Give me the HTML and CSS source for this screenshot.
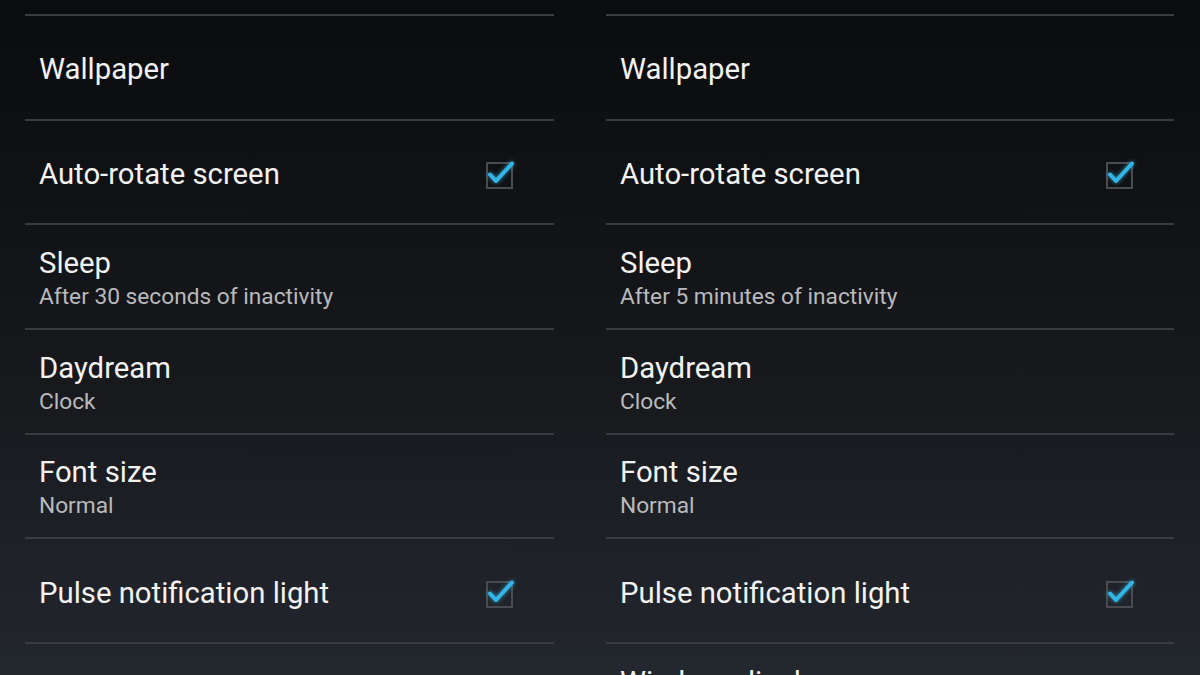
FILE: index.html
```html
<!DOCTYPE html>
<html>
<head>
<meta charset="utf-8">
<link rel="stylesheet" href="styles.css">
</head>
<body>
<div class="screen">
  <div class="panel panel-left">
    <div class="row"><div class="text"><div class="title">Wallpaper</div></div></div>
    <div class="row"><div class="text"><div class="title">Auto-rotate screen</div></div>
      <svg class="check" viewBox="0 0 34 34" width="34" height="34"><rect x="4" y="6" width="25" height="25" fill="none" stroke="#4a4b4e" stroke-width="2"/><path d="M7 17.5 L13 24 L29 6.5" fill="none" stroke="#33b5e5" stroke-width="4" stroke-linecap="round" stroke-linejoin="round" class="tick"/></svg></div>
    <div class="row two"><div class="text"><div class="title">Sleep</div><div class="sub">After 30 seconds of inactivity</div></div></div>
    <div class="row two"><div class="text"><div class="title">Daydream</div><div class="sub">Clock</div></div></div>
    <div class="row two"><div class="text"><div class="title">Font size</div><div class="sub">Normal</div></div></div>
    <div class="row"><div class="text"><div class="title">Pulse notification light</div></div>
      <svg class="check" viewBox="0 0 34 34" width="34" height="34"><rect x="4" y="6" width="25" height="25" fill="none" stroke="#4a4b4e" stroke-width="2"/><path d="M7 17.5 L13 24 L29 6.5" fill="none" stroke="#33b5e5" stroke-width="4" stroke-linecap="round" stroke-linejoin="round" class="tick"/></svg></div>
    <div class="row"></div>
  </div>
  <div class="panel panel-right">
    <div class="row"><div class="text"><div class="title">Wallpaper</div></div></div>
    <div class="row"><div class="text"><div class="title">Auto-rotate screen</div></div>
      <svg class="check" viewBox="0 0 34 34" width="34" height="34"><rect x="4" y="6" width="25" height="25" fill="none" stroke="#4a4b4e" stroke-width="2"/><path d="M7 17.5 L13 24 L29 6.5" fill="none" stroke="#33b5e5" stroke-width="4" stroke-linecap="round" stroke-linejoin="round" class="tick"/></svg></div>
    <div class="row two"><div class="text"><div class="title">Sleep</div><div class="sub">After 5 minutes of inactivity</div></div></div>
    <div class="row two"><div class="text"><div class="title">Daydream</div><div class="sub">Clock</div></div></div>
    <div class="row two"><div class="text"><div class="title">Font size</div><div class="sub">Normal</div></div></div>
    <div class="row"><div class="text"><div class="title">Pulse notification light</div></div>
      <svg class="check" viewBox="0 0 34 34" width="34" height="34"><rect x="4" y="6" width="25" height="25" fill="none" stroke="#4a4b4e" stroke-width="2"/><path d="M7 17.5 L13 24 L29 6.5" fill="none" stroke="#33b5e5" stroke-width="4" stroke-linecap="round" stroke-linejoin="round" class="tick"/></svg></div>
    <div class="row last"><div class="text"><div class="title">Wireless display</div></div></div>
  </div>
</div>
</body>
</html>
```

FILE: styles.css
```css
html, body {
  margin: 0;
  padding: 0;
}
body {
  width: 1200px;
  height: 675px;
  overflow: hidden;
  background: linear-gradient(to bottom, #0b0c0e 0%, #111215 30%, #181a1e 60%, #23272e 100%);
  font-family: Roboto, "Noto Sans", sans-serif;
  color: #f2f2f2;
}
.screen {
  display: flex;
  gap: 52px;
  padding: 14px 0 0 25px;
}
.panel-left { width: 529px; }
.panel-right { width: 568px; }
.row {
  box-sizing: border-box;
  height: 104.67px;
  border-top: 2px solid #393b3f;
  display: flex;
  align-items: center;
  justify-content: space-between;
  padding: 4px 37px 0 14px;
}
.row.two {
  padding-top: 7px;
}
.text {
  display: flex;
  flex-direction: column;
}
.title {
  font-size: 29.3px;
  line-height: 34px;
  color: #f2f2f2;
}
.sub {
  font-size: 22.7px;
  line-height: 34px;
  color: #b9babc;
}
.check {
  display: block;
  overflow: visible;
}
.tick {
  filter: drop-shadow(0 0 2px rgba(51, 181, 229, 0.8));
}
.row.last .text {
  align-self: flex-start;
  margin-top: 17px;
}
```
